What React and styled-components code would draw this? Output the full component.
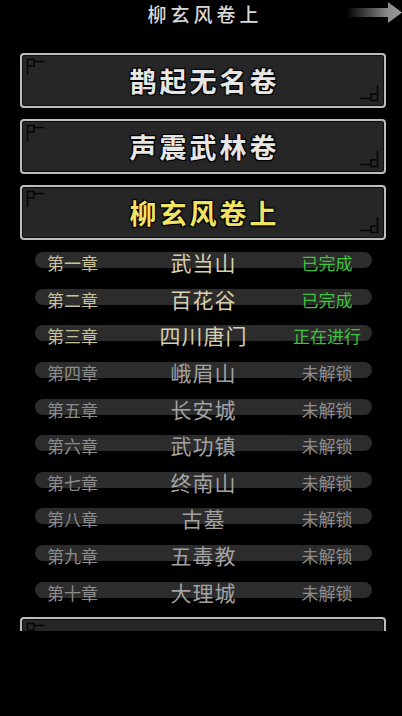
import React from "react";
import styled, { createGlobalStyle } from "styled-components";

const Global = createGlobalStyle`
  html, body {
    margin: 0;
    padding: 0;
    background: #000;
  }
  body {
    font-family: "Noto Sans CJK SC", "Noto Sans", sans-serif;
  }
`;

const Screen = styled.div`
  width: 402px;
  height: 716px;
  background: #000;
  display: flex;
  flex-direction: column;
  overflow: hidden;
`;

const Header = styled.header`
  position: relative;
  height: 26px;
  padding: 0 16px 0 20px;
  display: flex;
  align-items: center;
  justify-content: center;
`;

const Title = styled.h1`
  margin: 0;
  font-size: 19px;
  font-weight: 500;
  letter-spacing: 4px;
  padding-left: 4px;
  color: #d8d8d8;
  line-height: 1;
  text-shadow: 0 0 2px #000;
`;

const NextArrow = styled.svg`
  position: absolute;
  right: 0;
  top: 2px;
`;

const Scroller = styled.div`
  height: 578px;
  margin-top: 27px;
  padding: 0 16px 0 20px;
  overflow: hidden;
  display: flex;
  flex-direction: column;
  gap: 11px;
`;

const Card = styled.div`
  position: relative;
  flex: none;
  height: 51px;
  border: 2px solid #bdbdbd;
  border-radius: 4px;
  background: #262626;
  box-shadow: inset 0 0 0 1px #101010;
  display: flex;
  align-items: center;
  justify-content: center;
`;

const CardTitle = styled.span`
  font-size: 27px;
  font-weight: 700;
  letter-spacing: 3px;
  padding-left: 3px;
  line-height: 1;
  color: ${(p) => (p.$active ? "#f2e463" : "#e6e6e6")};
  text-shadow: 1px 1px 0 #000, -1px -1px 0 #000, 1px -1px 0 #000,
    -1px 1px 0 #000, 0 0 3px #000;
`;

const Corner = styled.svg`
  position: absolute;
  ${(p) =>
    p.$end
      ? "right: 5px; bottom: 4px; transform: rotate(180deg);"
      : "left: 4px; top: 3px;"}
`;

const ChapterList = styled.div`
  display: flex;
  flex-direction: column;
  padding: 0 14px 0 15px;
  margin: -9px 0 -2px;
`;

const Row = styled.div`
  height: 36.6px;
  display: flex;
  align-items: center;
`;

const Pill = styled.div`
  flex: 1;
  height: 16px;
  border-radius: 8px;
  background: #2c2c2c;
  padding-left: 12px;
  display: grid;
  grid-template-columns: 78px 1fr 90px;
  align-items: center;
`;

const ChapterNo = styled.span`
  font-size: 17px;
  line-height: 1;
  color: ${(p) => (p.$open ? "#c9c29a" : "#8c8c8c")};
`;

const ChapterName = styled.span`
  font-size: 21px;
  line-height: 1;
  text-align: center;
  letter-spacing: 1px;
  color: ${(p) => (p.$open ? "#d6d0b0" : "#a2a2a2")};
`;

const Status = styled.span`
  font-size: 17px;
  line-height: 1;
  text-align: center;
  white-space: nowrap;
  color: ${(p) => (p.$open ? "#3fc23f" : "#8c8c8c")};
`;

const CornerMark = ({ end }) => (
  <Corner $end={end} width="19" height="18" viewBox="0 0 19 18">
    <path
      d="M1.5 1.5 H8 V8 H1.5 Z M1.5 8 V17 M8 3.5 H18.5"
      fill="none"
      stroke="#050505"
      strokeWidth="1.5"
    />
  </Corner>
);

const Volume = ({ title, active }) => (
  <Card>
    <CornerMark />
    {title && <CardTitle $active={active}>{title}</CardTitle>}
    <CornerMark end />
  </Card>
);

const chapters = [
  ["第一章", "武当山", "已完成"],
  ["第二章", "百花谷", "已完成"],
  ["第三章", "四川唐门", "正在进行"],
  ["第四章", "峨眉山", "未解锁"],
  ["第五章", "长安城", "未解锁"],
  ["第六章", "武功镇", "未解锁"],
  ["第七章", "终南山", "未解锁"],
  ["第八章", "古墓", "未解锁"],
  ["第九章", "五毒教", "未解锁"],
  ["第十章", "大理城", "未解锁"],
];

export default function App() {
  return (
    <Screen>
      <Global />
      <Header>
        <Title>柳玄风卷上</Title>
        <NextArrow width="56" height="22" viewBox="0 0 56 22">
          <defs>
            <linearGradient id="arrowFade" x1="0" x2="1" y1="0" y2="0">
              <stop offset="0" stopColor="#8a8a8a" stopOpacity="0" />
              <stop offset="0.75" stopColor="#8a8a8a" />
              <stop offset="1" stopColor="#9a9a9a" />
            </linearGradient>
          </defs>
          <path
            d="M0 6 H42 V0 L56 10.5 L42 21 V15 H0 Z"
            fill="url(#arrowFade)"
          />
        </NextArrow>
      </Header>
      <Scroller>
        <Volume title="鹊起无名卷" />
        <Volume title="声震武林卷" />
        <Volume title="柳玄风卷上" active />
        <ChapterList>
          {chapters.map(([no, name, state], i) => {
            const open = i < 3;
            return (
              <Row key={no}>
                <Pill>
                  <ChapterNo $open={open}>{no}</ChapterNo>
                  <ChapterName $open={open}>{name}</ChapterName>
                  <Status $open={open}>{state}</Status>
                </Pill>
              </Row>
            );
          })}
        </ChapterList>
        <Volume />
      </Scroller>
    </Screen>
  );
}
